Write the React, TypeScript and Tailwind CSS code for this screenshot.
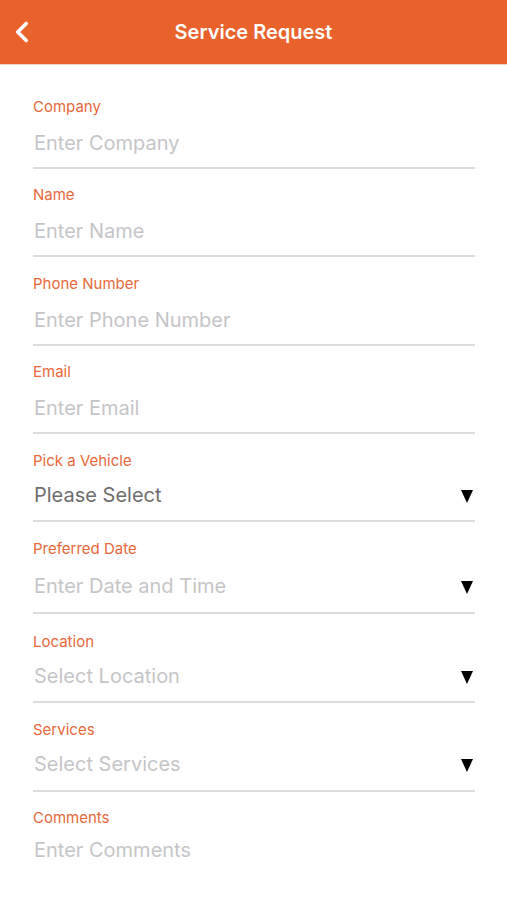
import { ChevronLeft } from 'lucide-react'

type Field = {
  label: string
  text: string
  dark?: boolean
  select?: boolean
  line?: boolean
  top: string
  gap: string
  bottom: string
}

// spacing per row is tuned by hand, the rows aren't perfectly even
const fields: Field[] = [
  { label: 'Company', text: 'Enter Company', line: true, top: 'pt-4', gap: 'mt-3', bottom: 'mb-[10px]' },
  { label: 'Name', text: 'Enter Name', line: true, top: 'pt-4', gap: 'mt-3', bottom: 'mb-[10px]' },
  { label: 'Phone Number', text: 'Enter Phone Number', line: true, top: 'pt-[17px]', gap: 'mt-3', bottom: 'mb-[10px]' },
  { label: 'Email', text: 'Enter Email', line: true, top: 'pt-4', gap: 'mt-3', bottom: 'mb-[10px]' },
  { label: 'Pick a Vehicle', text: 'Please Select', dark: true, select: true, line: true, top: 'pt-[17px]', gap: 'mt-[10px]', bottom: 'mb-[11px]' },
  { label: 'Preferred Date', text: 'Enter Date and Time', select: true, line: true, top: 'pt-[17px]', gap: 'mt-[13px]', bottom: 'mb-3' },
  { label: 'Location', text: 'Select Location', select: true, line: true, top: 'pt-[18px]', gap: 'mt-[10px]', bottom: 'mb-[11px]' },
  { label: 'Services', text: 'Select Services', select: true, line: true, top: 'pt-[17px]', gap: 'mt-[10px]', bottom: 'mb-3' },
  { label: 'Comments', text: 'Enter Comments', top: 'pt-4', gap: 'mt-2', bottom: 'mb-3' },
]

const Caret = () => (
  <svg width="12" height="13" viewBox="0 0 12 13" className="mr-[2px] mt-[2px]">
    <path d="M0 0H12L6 13Z" fill="#000" />
  </svg>
)

const FormField = ({ label, text, dark, select, line, top, gap, bottom }: Field) => (
  <div className={`${top} ${line ? 'border-b-2 border-[#dcdcdc]' : ''}`}>
    <p className="text-[15px] leading-5 text-[#e8673a]">{label}</p>
    <div className={`${gap} ${bottom} flex items-center justify-between h-7`}>
      <p
        className={`pl-[1px] text-[20px] leading-7 ${
          dark ? 'text-[#6e6e6e]' : 'text-[#c5c5c7]'
        }`}
      >
        {text}
      </p>
      {select && <Caret />}
    </div>
  </div>
)

export default function App() {
  return (
    <div className="w-[507px] h-[900px] bg-white overflow-hidden font-['Inter','Liberation_Sans',sans-serif]">
      <header className="h-[65px] bg-[#e9612b] border-b border-[#f3d3c4] relative flex items-center justify-center">
        <ChevronLeft
          className="absolute left-[5px] top-[15px] text-white"
          size={34}
          strokeWidth={2.6}
        />
        <h1 className="text-white text-[20px] font-semibold">Service Request</h1>
      </header>
      <main className="pl-[33px] pr-[32px] pt-4">
        {fields.map((f) => (
          <FormField key={f.label} {...f} />
        ))}
      </main>
    </div>
  )
}
